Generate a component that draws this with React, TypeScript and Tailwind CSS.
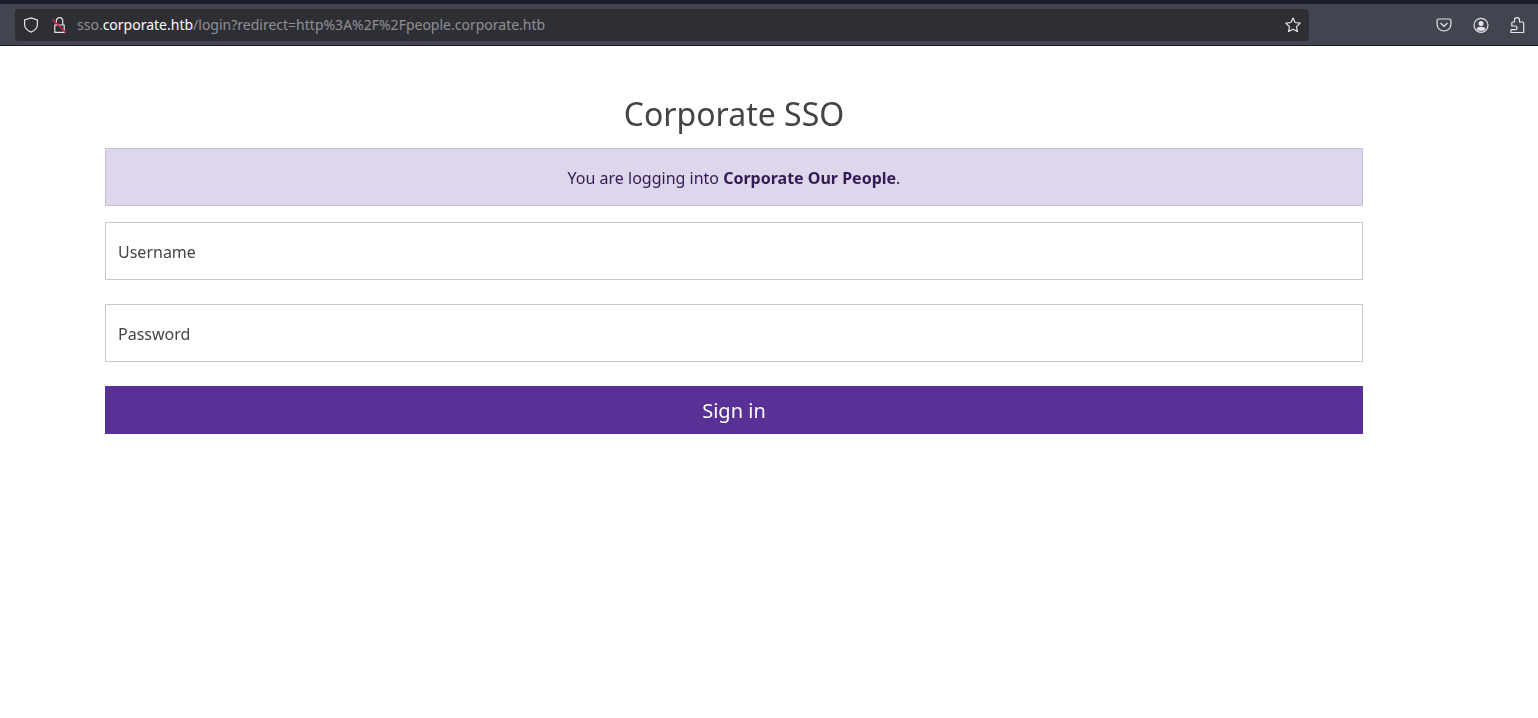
export default function App() {
  return (
    <div className="min-h-[718px] bg-white font-['Noto_Sans',sans-serif]">
      <div className="h-[46px] bg-[#1c1b22]">
        <div className="h-[4px] bg-[#1c1e29]" />
        <div className="flex h-[41px] items-center bg-[#42454f] pl-[15px]">
          <div className="flex h-[32px] w-[1294px] items-center rounded-[4px] bg-[#2e2f35] text-[14px] [will-change:opacity]">
            <svg viewBox="0 0 16 16" className="ml-[8px] h-[16px] w-[16px]" fill="none" stroke="#e4e4e8" strokeWidth="1.2">
              <path d="M8 .9 14.400 3v4.500c0 3.700-2.700 6.100-6.400 7.600C4.300 13.600 1.600 11.200 1.600 7.500V3z" />
            </svg>
            <svg viewBox="0 0 16 16" className="ml-[12px] h-[16px] w-[16px]" fill="none" strokeWidth="1.2">
              <path d="M5.300 8V3.800a3.200 3.200 0 0 1 6.400 0V8" stroke="#e4e4e8" />
              <path d="M3.800 8h9.400v7.300H3.800z" stroke="#e4e4e8" strokeLinejoin="round" />
              <path d="M1.500 2.500 15 15.800" stroke="#d5234c" strokeWidth="1.4" />
            </svg>
            <div className="ml-[10px] whitespace-nowrap leading-none">
              <span className="text-[#8f9096]">sso.</span>
              <span className="text-[#fbfbfe]">corporate.htb</span>
              <span className="text-[#8f9096]">/login?redirect=http%3A%2F%2Fpeople.corporate.htb</span>
            </div>
            <svg viewBox="0 0 16 16" className="ml-auto mr-[8px] h-[16px] w-[16px]" fill="none" stroke="#e4e4e8" strokeWidth="1.2" strokeLinejoin="round">
              <path d="M8 1 10.100 5.500l5 .7-3.600 3.400.9 4.900L8 12.200l-4.400 2.300.9-4.900L.9 6.200l5-.7z" />
            </svg>
          </div>
          <div className="ml-[127px] flex items-center gap-[21px]">
            <svg viewBox="0 0 16 16" className="h-[16px] w-[16px]" fill="none" stroke="#e4e4e8" strokeWidth="1.2" strokeLinecap="round" strokeLinejoin="round">
              <path d="M2.400 2h11.200c.8 0 1.300.5 1.300 1.300V7.500c0 3.600-3.100 6.500-6.900 6.500S1.100 11.100 1.100 7.500V3.300C1.100 2.500 1.600 2 2.400 2z" />
              <path d="m4.800 6.300 3.200 3 3.200-3" />
            </svg>
            <svg viewBox="0 0 16 16" className="h-[16px] w-[16px]" fill="none" stroke="#e4e4e8" strokeWidth="1.2">
              <circle cx="8" cy="8.300" r="7" />
              <circle cx="8" cy="6.500" r="2.500" fill="#e4e4e8" stroke="none" />
              <path d="M3.300 12c.8-1.500 2.300-2.200 4.700-2.200s3.900.7 4.700 2.200c-1.200 1.300-2.800 2-4.700 2s-3.500-.7-4.700-2z" fill="#e4e4e8" stroke="none" />
            </svg>
            <svg viewBox="0 0 16 16" className="h-[16px] w-[16px]" fill="none" stroke="#e4e4e8" strokeWidth="1.2" strokeLinejoin="round">
              <path d="M4.500 5V3c0-1.400 1-2.300 2.500-2.300S9.500 1.600 9.500 3v2h3.300c.5 0 .9.400.9.900v9.800H1v-3h4c1.200 0 2-.7 2-1.800S6.200 9 5 9H1.800V5.900c0-.5.400-.9.900-.9z" />
            </svg>
          </div>
        </div>
      </div>
      <main className="ml-[105px] w-[1258px] pt-[46px] text-[#333333] [will-change:opacity]">
        <h1 className="mb-[12px] text-center text-[32px] font-normal leading-[44px] text-[#444444]">Corporate SSO</h1>
        <div className="mb-[16px] border border-[#c8c0dc] bg-[#ded6eb] px-[16px] pb-[15px] pt-[17px] text-center text-[16px] leading-[24px] text-[#331b54]">
          You are logging into <strong className="font-bold">Corporate Our People</strong>.
        </div>
        <input placeholder="Username" className="mb-[24px] block h-[58px] w-full border border-[#c9c9cc] pl-[12px] pr-[12px] pt-[2px] text-[16px] placeholder:text-[#444444]" />
        <input placeholder="Password" className="mb-[24px] block h-[58px] w-full border border-[#c9c9cc] pl-[12px] pr-[12px] pt-[2px] text-[16px] placeholder:text-[#444444]" />
        <button className="block h-[48px] w-full bg-[#593196] pt-[2px] text-[20px] text-white">Sign in</button>
      </main>
    </div>
  );
}
